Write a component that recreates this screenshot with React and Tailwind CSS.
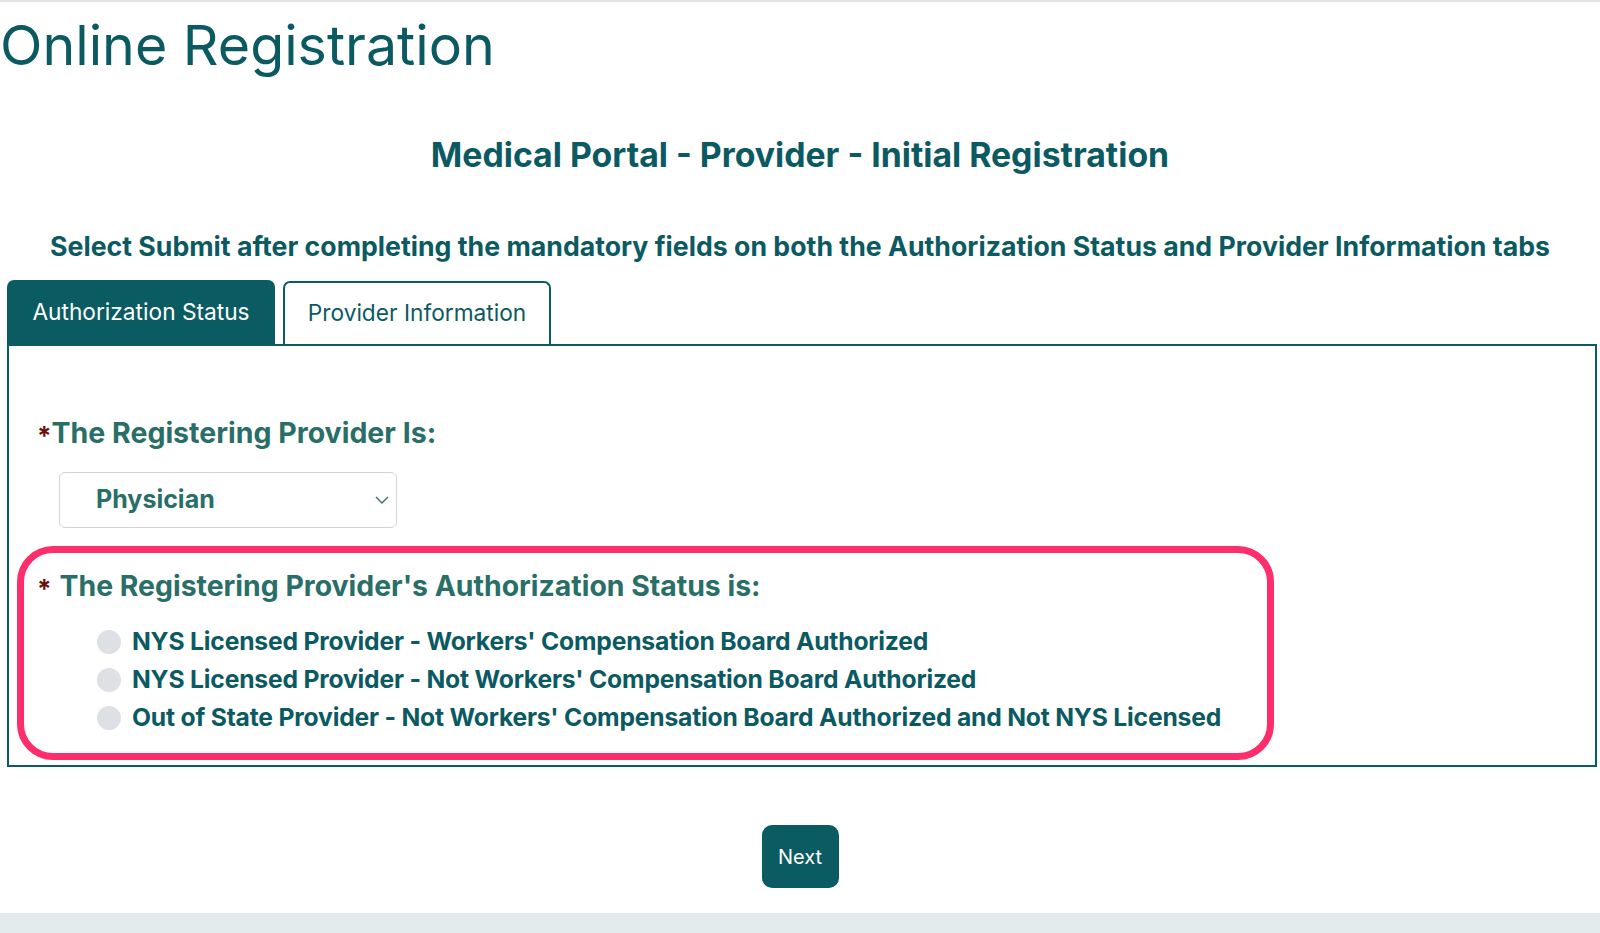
import React from "react";

const teal = "text-[#0b5a62]";

function Radio({ label }) {
  return (
    <label className="flex items-center h-[38px] cursor-pointer">
      <span className="w-[24px] h-[24px] rounded-full bg-[#dde0e4] shrink-0" />
      <span className={`ml-[11px] text-[24.7px] font-bold tracking-[-0.2px] ${teal}`}>{label}</span>
    </label>
  );
}

export default function App() {
  return (
    <div className="min-h-[933px] flex flex-col bg-white font-['Inter',sans-serif]">
      <div className="h-[2px] bg-[#e4e4e4]" />

      <main className="flex-1">
        {/* Page heading */}
        <h1 className={`mt-[11px] text-[55.5px] leading-[64px] ${teal}`}>Online Registration</h1>

        <h2 className={`mt-[58px] text-center text-[33.8px] leading-[40px] font-bold ${teal}`}>
          Medical Portal - Provider - Initial Registration
        </h2>

        <p className={`mt-[55px] text-center text-[26.7px] leading-[32px] font-bold ${teal}`}>
          Select Submit after completing the mandatory fields on both the Authorization Status and Provider Information tabs
        </p>

        {/* Tabs */}
        <div className="ml-[7px] mr-[3px] mt-[18px]">
          <div className="flex gap-[8px] items-end">
            <button className="w-[268px] h-[64px] rounded-t-[7px] bg-[#0b5b62] text-white text-[22.7px]">
              Authorization Status
            </button>
            <button className={`w-[268px] h-[63px] rounded-t-[7px] border-2 border-b-0 border-[#0b5b62] bg-white text-[22.7px] ${teal}`}>
              Provider Information
            </button>
          </div>

          <div className="border-2 border-[#0b5b62] pt-[69px] pb-[5px]">
            <div className="flex items-baseline pl-[28px] text-[28.5px] leading-[36px] font-bold text-[#2a6e68]">
              <span className="text-[26px] text-[#6e0d0d] relative top-[2px]">*</span>
              <span>The Registering Provider Is:</span>
            </div>

            <div className="ml-[50px] mt-[20px] w-[338px] h-[56px] rounded-[6px] border border-[#cfd4d8] flex items-center justify-between pl-[36px] pr-[7px]">
              <span className="text-[25px] font-bold text-[#2a6e68]">Physician</span>
              <svg width="14" height="8" viewBox="0 0 14 8" fill="none">
                <path d="M1 1l6 6 6-6" stroke="#3d6f6c" strokeWidth="1.4" />
              </svg>
            </div>

            {/* Highlighted authorization status */}
            <div className="ml-[8px] mt-[18px] w-[1257px] rounded-[36px] border-[7px] border-[#fe2e6c] pt-[15px] pb-[16px]">
              <div className="flex items-baseline pl-[13px] text-[28.4px] leading-[36px] font-bold text-[#2a6e68]">
                <span className="text-[26px] text-[#6e0d0d] relative top-[2px]">*</span>
                <span className="ml-[8px]">The Registering Provider's Authorization Status is:</span>
              </div>
              <div className="mt-[18px] pl-[73px]">
                <Radio label="NYS Licensed Provider - Workers' Compensation Board Authorized" />
                <Radio label="NYS Licensed Provider - Not Workers' Compensation Board Authorized" />
                <Radio label="Out of State Provider - Not Workers' Compensation Board Authorized and Not NYS Licensed" />
              </div>
            </div>
          </div>
        </div>

        <div className="flex justify-center mt-[58px]">
          <button className="w-[77px] h-[63px] rounded-[10px] bg-[#0b5b62] text-white text-[20px]">Next</button>
        </div>
      </main>

      <div className="h-[20px] bg-[#e3ecec]" />
    </div>
  );
}
